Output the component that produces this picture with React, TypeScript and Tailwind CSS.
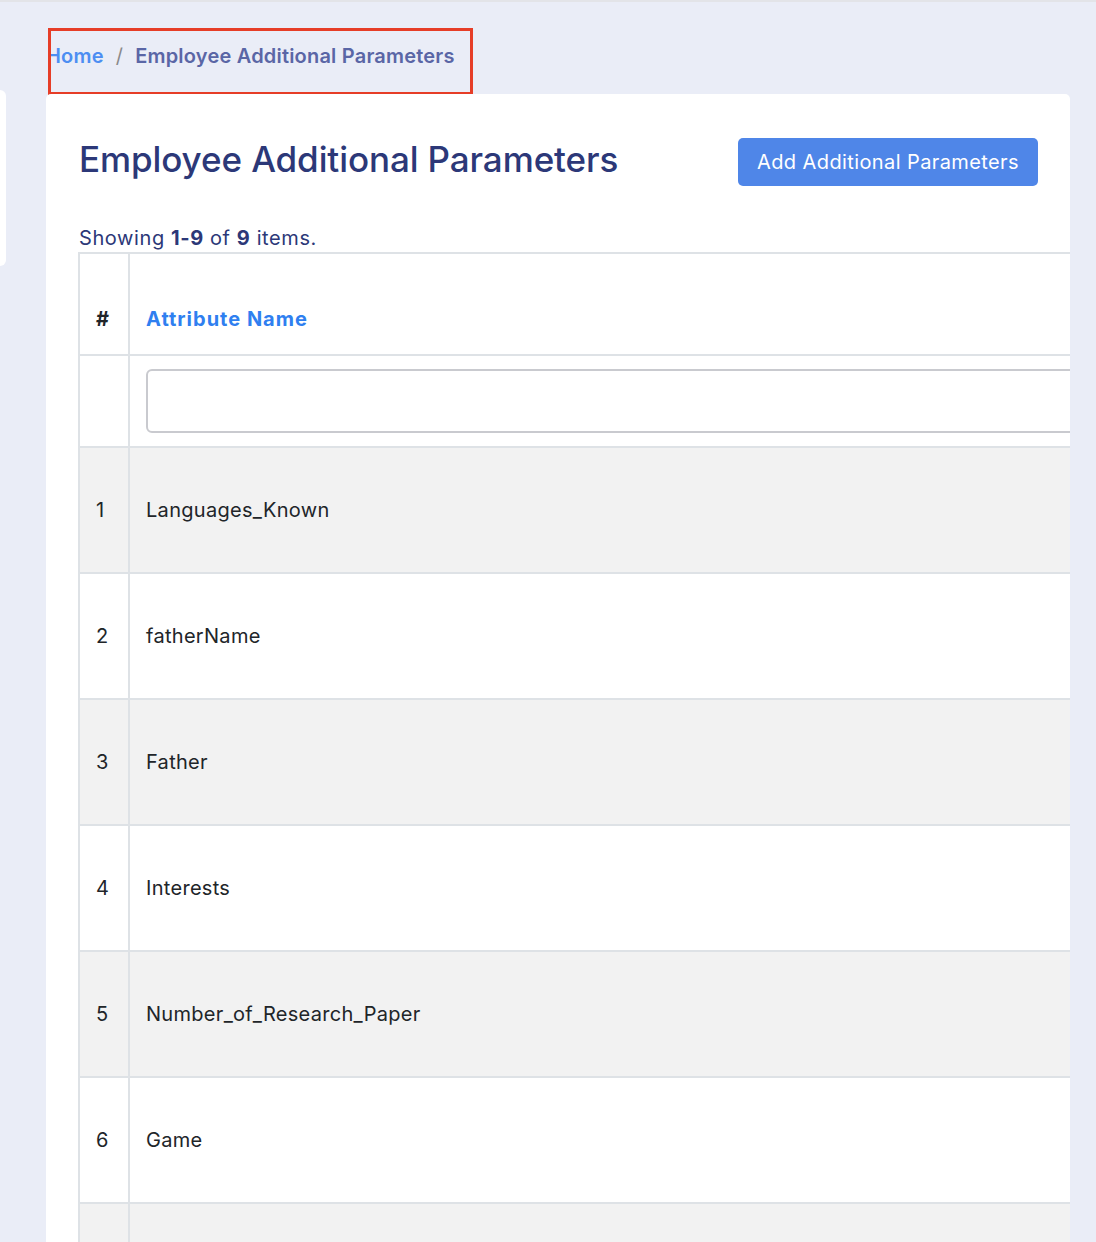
import React from "react";

const rows = [
  "Languages_Known",
  "fatherName",
  "Father",
  "Interests",
  "Number_of_Research_Paper",
  "Game",
  "",
];

export default function App() {
  return (
    <div
      className="min-h-[1242px] bg-[#eaedf7] border-t-2 border-[#e3e4e8] overflow-hidden"
      style={{ fontFamily: "Inter, 'Noto Sans', sans-serif" }}
    >
      <div className="flex">
        {/* sidebar stub peeking in from the left */}
        <div className="w-[6px] shrink-0 pt-[88px]">
          <div className="h-[176px] bg-white rounded-r-[8px]" />
        </div>

        <div className="ml-[40px] w-[1024px] shrink-0">
          {/* breadcrumb */}
          <div className="ml-[2px] mt-[26px] w-[425px] h-[67px] border-[3px] border-[#e63d27] overflow-hidden flex items-center">
            <ol className="flex items-center gap-[12px] -ml-[5px] -mt-[12px] text-[20px] tracking-[0.2px] font-semibold whitespace-nowrap">
              <li className="text-[#4d8ef2]">Home</li>
              <li className="text-[#8a8a8a] font-normal">/</li>
              <li className="text-[#5a66a6]">Employee Additional Parameters</li>
            </ol>
          </div>

          {/* card */}
          <div className="-mt-[1px] bg-white rounded-t-[5px] overflow-hidden min-h-[1160px] pl-[32px] pt-[40px]">
            <div className="flex items-start justify-between pr-[32px]">
              <h1 className="text-[35px] leading-[50px] font-medium text-[#2c3878] tracking-[-0.1px] ml-[1px]">
                Employee Additional Parameters
              </h1>
              <button className="mt-[4px] h-[48px] px-[19px] bg-[#4f86e8] text-white text-[20px] tracking-[0.4px] rounded-[5px]">
                Add Additional Parameters
              </button>
            </div>

            <p className="mt-[38px] text-[20px] leading-[28px] tracking-[0.6px] text-[#2c3878] ml-[1px]">
              Showing <b className="font-bold">1-9</b> of <b className="font-bold">9</b> items.
            </p>

            <table className="w-[1200px] border-collapse border-2 border-[#dee2e6] text-[20px] tracking-[0.3px] text-[#212529]">
              <thead>
                <tr className="h-[102px]">
                  <th className="w-[50px] border-2 border-[#dee2e6] align-bottom text-left pl-[16px] pb-[20px] font-bold">
                    #
                  </th>
                  <th className="border-2 border-[#dee2e6] align-bottom text-left pl-[16px] pb-[20px] font-bold tracking-[1px] text-[#2f7ff0]">
                    Attribute Name
                  </th>
                </tr>
              </thead>
              <tbody>
                <tr className="h-[92px]">
                  <td className="border-2 border-[#dee2e6]" />
                  <td className="border-2 border-[#dee2e6] pl-[16px]">
                    <div className="h-[64px] w-full border-2 border-[#c9cacf] rounded-[6px] bg-white" />
                  </td>
                </tr>
                {rows.map((name, i) => (
                  <tr key={i} className={i % 2 === 0 ? "h-[126px] bg-[#f2f2f2]" : "h-[126px] bg-white"}>
                    <td className="border-2 border-[#dee2e6] pl-[16px]">{name ? i + 1 : ""}</td>
                    <td className="border-2 border-[#dee2e6] pl-[16px]">{name}</td>
                  </tr>
                ))}
              </tbody>
            </table>
          </div>
        </div>
      </div>
    </div>
  );
}
